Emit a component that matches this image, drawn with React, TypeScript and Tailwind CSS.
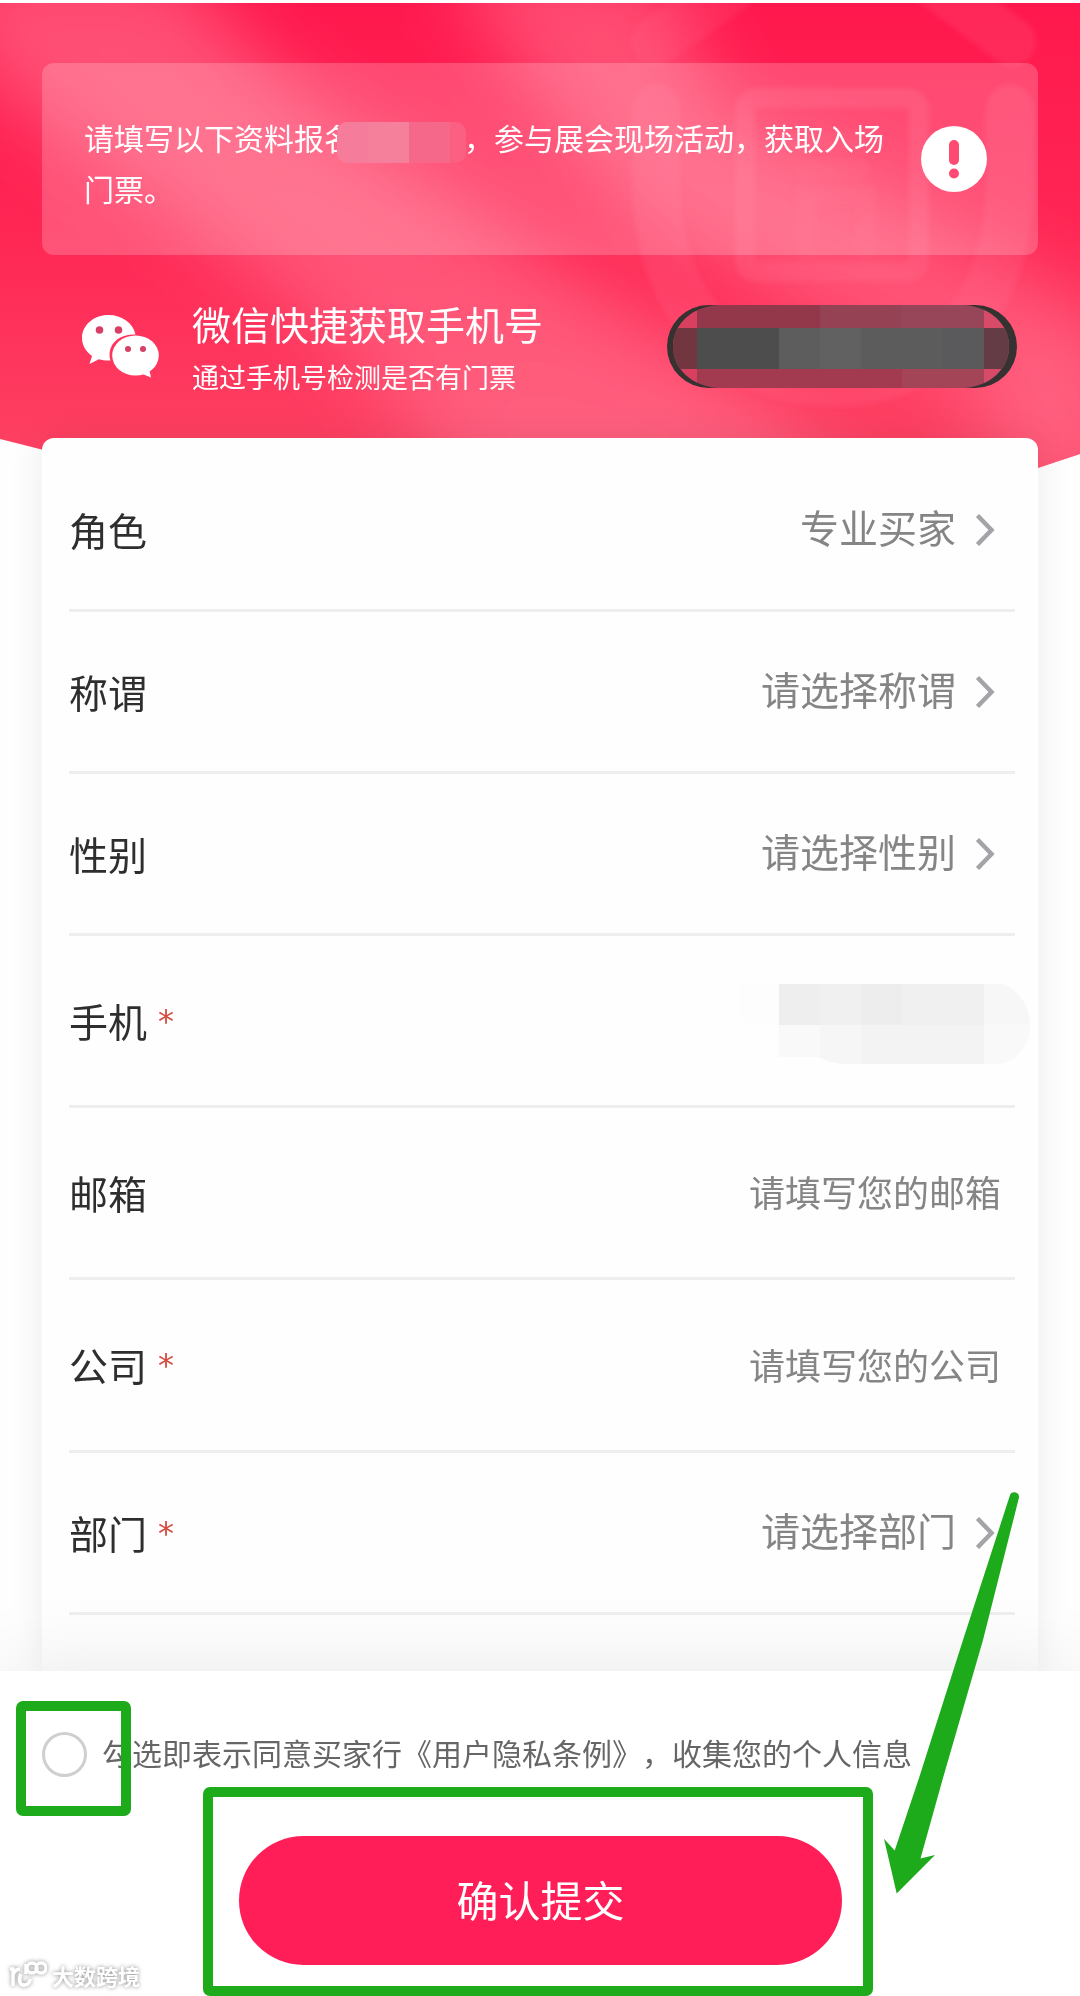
import type { ReactNode } from "react";

type Field = {
  label: string;
  required?: boolean;
  type: "select" | "input" | "masked";
  value?: string;
  height: string;
};

const fields: Field[] = [
  { label: "角色", type: "select", value: "专业买家", height: "h-[162px]" },
  { label: "称谓", type: "select", value: "请选择称谓", height: "h-[162px]" },
  { label: "性别", type: "select", value: "请选择性别", height: "h-[162px]" },
  { label: "手机", required: true, type: "masked", height: "h-[172px]" },
  { label: "邮箱", type: "input", value: "请填写您的邮箱", height: "h-[172px]" },
  {
    label: "公司",
    required: true,
    type: "input",
    value: "请填写您的公司",
    height: "h-[173px]",
  },
  {
    label: "部门",
    required: true,
    type: "select",
    value: "请选择部门",
    height: "h-[162px]",
  },
];

const HeaderBackground = () => (
  <svg
    className="absolute left-0 top-[3px]"
    width="1080"
    height="500"
    viewBox="0 3 1080 500"
  >
    <defs>
      <linearGradient id="base" x1="0" y1="0" x2="0" y2="1">
        <stop offset="0" stopColor="#ff184d" />
        <stop offset="0.45" stopColor="#ff2654" />
        <stop offset="1" stopColor="#fd4766" />
      </linearGradient>
      <filter id="soft" x="-30%" y="-30%" width="160%" height="160%">
        <feGaussianBlur stdDeviation="36" />
      </filter>
      <filter id="edge" x="-10%" y="-10%" width="120%" height="120%">
        <feGaussianBlur stdDeviation="2.5" />
      </filter>
      <clipPath id="slab">
        <path d="M0 3H1080V454L640 600L0 439Z" />
      </clipPath>
    </defs>
    <g clipPath="url(#slab)">
      <rect y="3" width="1080" height="500" fill="url(#base)" />
      <g filter="url(#soft)" fill="#ff6a88">
        <path
          d="M-60 -40L170 -40L290 90L560 270L760 400L900 520L500 540L340 340L180 220L-20 80Z"
          opacity="0.65"
        />
        <path
          d="M440 -40L660 -40L720 110L900 200L1120 330L1120 500L980 400L800 310L640 220L510 60Z"
          opacity="0.62"
        />
        <path d="M500 350L700 390L860 500L400 500Z" opacity="0.25" />
        <path d="M1000 340L1100 360L1100 500L960 500Z" opacity="0.5" />
      </g>
      {/* brand mark */}
      <g fill="none" stroke="#ff7f9a" strokeLinecap="round" filter="url(#edge)">
        <path d="M655 42L730 -10" strokeWidth="48" opacity="0.12" />
        <path d="M1012 42L930 -20" strokeWidth="48" opacity="0.15" />
        <path
          d="M656 108V180C656 310 735 382 835 382C935 382 1010 310 1010 180V108"
          strokeWidth="48"
          opacity="0.16"
        />
        <rect
          x="745"
          y="98"
          width="174"
          height="174"
          rx="12"
          strokeWidth="20"
          opacity="0.18"
        />
        <path
          d="M788 140H874M806 170H860M806 250V195H866V250"
          strokeWidth="20"
          opacity="0.08"
        />
      </g>
    </g>
  </svg>
);

const WechatIcon = () => (
  <svg width="78" height="64" viewBox="0 0 78 64" className="shrink-0">
    <path
      d="M27.5 1C12.8 1 1 11 1 24c0 7.200 3.800 13.600 10 18l-2.500 8 9.300-4.800c3.100.9 6.200 1.400 9.700 1.400h2C25 31 38 19.500 54.500 20.500 52 9 41 1 27.500 1Z"
      fill="#fff"
    />
    <ellipse cx="54.500" cy="41.500" rx="23.300" ry="20" fill="#fff" />
    <path d="M59 59l11 4.500-2-9Z" fill="#fff" />
    <g fill="#d83f65">
      <circle cx="18.500" cy="16" r="3.800" />
      <circle cx="37.500" cy="16" r="3.800" />
      <circle cx="47" cy="35" r="3" />
      <circle cx="62" cy="35" r="3" />
    </g>
  </svg>
);

const NoticeIcon = () => (
  <svg width="66" height="66" viewBox="0 0 66 66">
    <circle cx="33" cy="33" r="33" fill="#fff" />
    <rect x="28" y="14" width="10" height="25" rx="5" fill="#ff4a72" />
    <circle cx="33" cy="47.500" r="5" fill="#ff4a72" />
  </svg>
);

const Chevron = () => (
  <svg width="20" height="34" viewBox="0 0 20 34" className="shrink-0">
    <path
      d="M2.500 2.500L16.500 17L2.500 31.500"
      fill="none"
      stroke="#a3a3a8"
      strokeWidth="4.500"
    />
  </svg>
);

// Pixelated cover over the quick login button
const MaskedButton = () => (
  <svg width="350" height="83" viewBox="0 0 350 83" className="shrink-0">
    <defs>
      <clipPath id="pillMask">
        <path d="M50 0H298C323 2 342 19 342 41.500S323 81 298 83H50C25 81 6 64 6 41.500S25 2 50 0Z" />
      </clipPath>
    </defs>
    <rect width="350" height="83" rx="41.500" fill="#363232" />
    <g clipPath="url(#pillMask)">
      <rect width="30" height="83" fill="#d93f5e" />
      <rect x="317" width="33" height="83" fill="#d74b69" />
      <rect y="23" width="30" height="41" fill="#713640" />
      <rect x="317" y="23" width="33" height="41" fill="#633c45" />
      <rect x="30" width="123" height="23" fill="#93384b" />
      <rect x="153" width="82" height="23" fill="#964255" />
      <rect x="235" width="82" height="23" fill="#964658" />
      <rect x="30" y="64" width="205" height="19" fill="#a33b50" />
      <rect x="235" y="64" width="82" height="19" fill="#a34457" />
      <rect x="30" y="23" width="82" height="41" fill="#4d4d4d" />
      <rect x="112" y="23" width="41" height="41" fill="#5d5d5d" />
      <rect x="153" y="23" width="41" height="41" fill="#616161" />
      <rect x="194" y="23" width="82" height="41" fill="#5c5c5c" />
      <rect x="276" y="23" width="41" height="41" fill="#5a5a5c" />
    </g>
  </svg>
);

const MaskedPhone = () => (
  <svg width="295" height="88" viewBox="0 0 295 88" className="shrink-0">
    <path d="M0 4H41V45H20C8 45 0 34 0 24Z" fill="#fdfdfd" />
    <rect x="41" y="4" width="205" height="41" fill="#f0f0f0" />
    <path d="M246 4H266C281 11 292 26 292 45H246Z" fill="#f7f7f7" />
    <rect x="41" y="4" width="41" height="41" fill="#eeeeee" />
    <rect x="123" y="4" width="41" height="41" fill="#ededed" />
    <path
      d="M41 45H292C292 66 278 84 258 84H110C97 84 88 81 81 77H41Z"
      fill="#f9f9f9"
    />
    <path d="M82 45H123V84H110C97 84 88 81 82 77Z" fill="#f6f6f6" />
    <rect x="123" y="45" width="123" height="39" fill="#f3f3f3" />
  </svg>
);

const FieldRow = ({ field }: { field: Field }) => (
  <div
    className={`flex items-center justify-between border-b-[3px] border-[#eeeeee] ${field.height}`}
  >
    <div className="flex items-center pb-[2px] text-[39px] leading-[56px] text-[#2e2e2e]">
      {field.label}
      {field.required && (
        <span className="ml-[11px] mt-[2px] font-['DejaVu_Sans',sans-serif] text-[32px] text-[#d64b40]">
          *
        </span>
      )}
    </div>
    {field.type === "select" && (
      <div className="flex items-center gap-[19px] pr-[20px] text-[39px] leading-[56px] text-[#858585]">
        <span className="-mt-[7px]">{field.value}</span>
        <Chevron />
      </div>
    )}
    {field.type === "input" && (
      <span className="pb-[3px] pr-[14px] text-[36px] leading-[52px] text-[#858585]">
        {field.value}
      </span>
    )}
    {field.type === "masked" && (
      <div className="-mr-[18px] pt-[6px]">
        <MaskedPhone />
      </div>
    )}
  </div>
);

const Marked = ({
  children,
  className,
}: {
  children?: ReactNode;
  className: string;
}) => (
  <div className={`rounded-[7px] border-[10px] border-[#1dab1b] ${className}`}>
    {children}
  </div>
);

const Arrow = () => (
  <svg
    className="absolute left-[880px] top-[1490px]"
    width="144"
    height="408"
    viewBox="880 1490 144 408"
  >
    <path
      d="M1010.200 1494.500C1012 1490.500 1019.500 1492 1019 1497.500L983 1640L943 1778L920.500 1858.500L935 1855L896.700 1893.500L884 1838.800L894.700 1850.400L919 1778L963 1640Z"
      fill="#1dab1b"
    />
  </svg>
);

const Watermark = () => (
  <div className="absolute left-[8px] top-[1960px] flex items-center gap-[5px] drop-shadow-[0_0_2px_rgba(0,0,0,0.45)]">
    <svg width="39" height="30" viewBox="0 0 39 30">
      <g fill="none" stroke="#fff" strokeWidth="3.500">
        <path d="M2 9H5V26M5 15Q7 9 12 9" />
        <path d="M13 14C10 20 12 26 17 25Q22 24 22 19" />
        <path d="M18 14V4" />
        <circle cx="24" cy="8" r="5" />
        <circle cx="33" cy="8" r="5" />
      </g>
    </svg>
    <span className="text-[22px] font-bold leading-[30px] text-white">
      大数跨境
    </span>
  </div>
);

const App = () => {
  return (
    <div className="relative flex h-[1996px] w-[1080px] flex-col overflow-hidden bg-[#fefefe] font-['Noto_Sans_CJK_SC',sans-serif] [text-spacing-trim:space-all]">
      <HeaderBackground />

      <header className="relative h-[438px] px-[42px] pt-[63px]">
        <div className="flex h-[192px] items-center justify-between rounded-[12px] bg-white/20 pl-[42px] pr-[51px]">
          <div className="pt-[8px] text-[30px] leading-[51px] text-white">
            <div className="flex h-[51px] items-start whitespace-nowrap">
              请填写以下资料报名
              <span className="-ml-[17px] mt-[10px] flex h-[41px] w-[129px] overflow-hidden rounded-[10px]">
                <span className="w-[31px] bg-[#f57d9b]" />
                <span className="w-[41px] bg-[#f4809c]" />
                <span className="w-[41px] bg-[#f66889]" />
                <span className="w-[16px] bg-[#fb5f81]" />
              </span>
              <span className="-ml-[2px]">，参与展会现场活动，获取入场</span>
            </div>
            <div>门票。</div>
          </div>
          <NoticeIcon />
        </div>

        <div className="flex items-center pl-[39px] pr-[21px] pt-[40px]">
          <WechatIcon />
          <div className="ml-[33px] flex-1 text-white">
            <div className="text-[39px] leading-[56px]">
              微信快捷获取手机号
            </div>
            <div className="pt-[6px] text-[27px] leading-[40px]">
              通过手机号检测是否有门票
            </div>
          </div>
          <MaskedButton />
        </div>
      </header>

      <main className="relative mx-[42px] h-[1233px] rounded-t-[12px] bg-[#fefefe] pl-[27px] pr-[23px] pt-[12px] shadow-[0_0_36px_rgba(0,0,0,0.075)]">
        {fields.map((field) => (
          <FieldRow key={field.label} field={field} />
        ))}
      </main>

      <footer className="relative h-[325px] bg-white shadow-[0_0_80px_rgba(0,0,0,0.09)]">
        <div className="flex h-[116px] items-center pl-[42px] pt-[50px]">
          <span className="h-[45px] w-[45px] shrink-0 rounded-full border-[3px] border-[#cfcfcf]" />
          <span className="-mt-[5px] ml-[15px] whitespace-nowrap text-[30px] leading-[44px] text-[#666666]">
            勾选即表示同意买家行《用户隐私条例》，收集您的个人信息
          </span>
        </div>
        <Marked className="absolute left-[16px] top-[30px] h-[115px] w-[115px]" />
        <Marked className="ml-[203px] flex h-[209px] w-[670px] justify-center pl-[5px] pt-[39px]">
          <button className="h-[129px] w-[603px] rounded-full bg-[#ff1e57] pb-[3px] text-[42px] leading-none text-white">
            确认提交
          </button>
        </Marked>
      </footer>

      <Arrow />
      <Watermark />
    </div>
  );
};

export default App;
